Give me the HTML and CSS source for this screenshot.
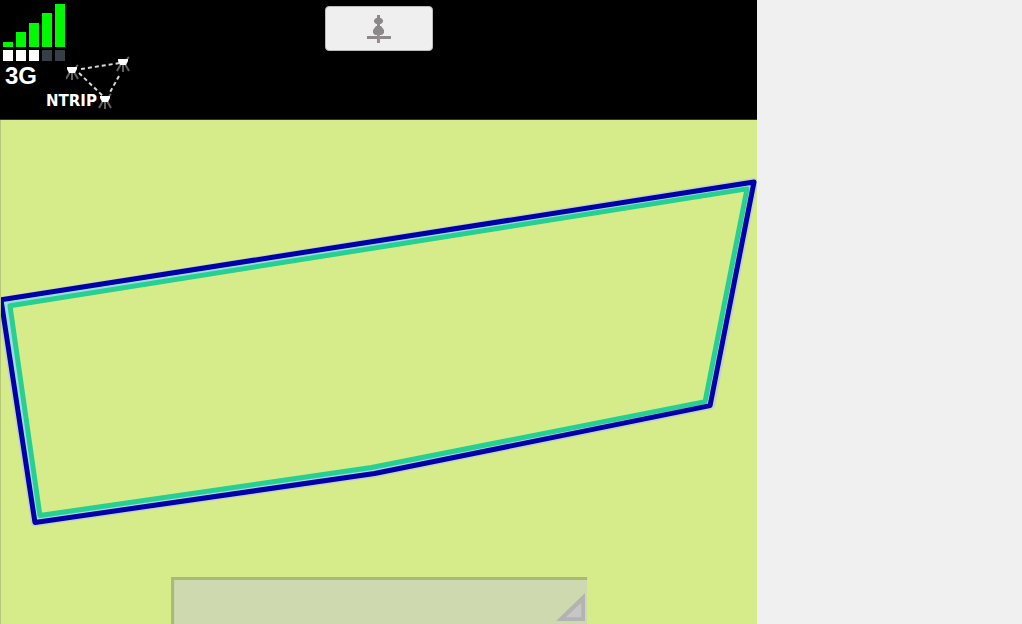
FILE: index.html
```html
<!DOCTYPE html>
<html lang="en">
<head>
<meta charset="utf-8">
<meta name="viewport" content="width=device-width, initial-scale=1">
<title>Field map</title>
<link rel="stylesheet" href="styles.css">
</head>
<body>
<div class="app">
  <main class="device">
    <header class="status-bar">
      <div class="status">
        <div class="network">
          <svg class="signal" viewBox="0 0 66 58" aria-hidden="true">
            <g fill="#00f800">
              <rect x="3" y="38" width="10" height="5"/>
              <rect x="16" y="28" width="10" height="15"/>
              <rect x="29" y="19" width="10" height="24"/>
              <rect x="42" y="9" width="10" height="34"/>
              <rect x="55" y="0" width="10" height="43"/>
            </g>
            <g fill="#fff">
              <rect x="3" y="46" width="10" height="11"/>
              <rect x="16" y="46" width="10" height="11"/>
              <rect x="29" y="46" width="10" height="11"/>
            </g>
            <g fill="#383e46">
              <rect x="42" y="46" width="10" height="11"/>
              <rect x="55" y="46" width="10" height="11"/>
            </g>
          </svg>
          <span class="network-type">3G</span>
        </div>
        <div class="ntrip">
          <svg class="stations" viewBox="0 0 66 54" aria-hidden="true">
            <defs>
              <g id="station">
                <path d="M0 1V10M-2 2L-6 9M2 2L6 9M4 -3L6 -5" stroke="#626262" stroke-width="2" fill="none"/>
                <path d="M-5 -3H5V-1L3 3H-3L-5 -1Z" fill="#fff"/>
              </g>
            </defs>
            <path d="M15 13L54 7M13 17L38 41M53 20L43 38" fill="none" stroke="#d8d8d8" stroke-width="2" stroke-dasharray="4 3"/>
            <use href="#station" x="6" y="14"/>
            <use href="#station" x="57" y="6"/>
            <use href="#station" x="39" y="43"/>
          </svg>
          <span class="ntrip-label">NTRIP</span>
        </div>
      </div>
      <button class="position-button" type="button" aria-label="Centre on position">
        <svg class="position-icon" viewBox="0 0 24 30" aria-hidden="true">
          <g fill="#8b8989">
            <rect x="10" y="1" width="3" height="28"/>
            <path d="M7 6L9 4H14L16 6V8L14 10H9L7 8Z"/>
            <path d="M6 16L9 12H14L17 16V19L15 21H8L6 19Z"/>
            <rect x="0" y="22" width="24" height="3"/>
          </g>
          <path d="M12 20V29" stroke="#b09090" stroke-width="1"/>
        </svg>
      </button>
    </header>
    <section class="map">
      <svg class="field" viewBox="0 0 757 504" role="img" aria-label="Field boundary">
        <g fill="none" stroke-linejoin="round">
          <path class="glow" d="M0 181L754 62L711 286L374 354L34 403Z"/>
          <path class="gap" d="M5 184L750 66L708 283L373 351L37 400Z"/>
          <path class="inner" d="M9 186L747 69L705 282L371 348L39 396Z"/>
          <path class="outer" d="M0 180L754 62L710 286L374 354L34 403Z"/>
        </g>
      </svg>
      <div class="selector">
        <select class="layer-select" aria-label="Layer"><option value=""></option></select>
        <svg class="select-corner" viewBox="0 0 30 29" aria-hidden="true">
          <path d="M0 29L30 0V29Z" fill="#b3b3b1"/>
          <path d="M10 25L26 10V25Z" fill="#c6c7c5"/>
        </svg>
      </div>
    </section>
  </main>
  <aside class="side"></aside>
</div>
</body>
</html>
```
FILE: styles.css
```css
* {
  box-sizing: border-box;
}

body {
  margin: 0;
  font-family: "Liberation Sans", Arial, sans-serif;
  background: #f0f0f0;
}

.app {
  display: grid;
  grid-template-columns: 757fr 265fr;
  min-height: 100vh;
}

.device {
  display: flex;
  flex-direction: column;
  min-width: 0;
}

.status-bar {
  display: grid;
  grid-template-columns: 1fr 108px 1fr;
  align-items: start;
  height: 120px;
  padding-top: 4px;
  background: #000;
  border-bottom: 1px solid #33371f;
  color: #fff;
}

.status {
  display: flex;
}

.network {
  display: flex;
  flex-direction: column;
  width: 66px;
}

.signal {
  display: block;
  width: 66px;
  height: 58px;
}

.network-type {
  padding-left: 5px;
  font-size: 24px;
  line-height: 28px;
  font-weight: bold;
}

.ntrip {
  display: grid;
  margin-top: 52px;
}

.ntrip > * {
  grid-area: 1 / 1;
}

.stations {
  width: 66px;
  height: 54px;
}

.ntrip-label {
  align-self: end;
  margin-left: -20px;
  font-family: "DejaVu Sans", sans-serif;
  font-size: 15px;
  line-height: 18px;
  font-weight: bold;
}

.position-button {
  display: flex;
  align-items: center;
  justify-content: center;
  height: 45px;
  margin-top: 2px;
  padding: 0;
  border: 1px solid #bbb;
  border-radius: 4px;
  background: #efefef;
}

.position-icon {
  width: 24px;
  height: 30px;
}

.map {
  position: relative;
  display: flex;
  flex: 1;
  overflow: hidden;
  background: #d6ec8b;
  border-left: 1px solid #b5c87a;
}

.field {
  display: block;
  width: 100%;
  height: auto;
  align-self: flex-start;
}

.glow {
  stroke: #c4d2c0;
  stroke-width: 8px;
}

.gap {
  stroke: #9cdfe0;
  stroke-width: 5px;
}

.inner {
  stroke: #27cf91;
  stroke-width: 5px;
}

.outer {
  stroke: #0000a8;
  stroke-width: 5px;
}

.selector {
  position: absolute;
  left: 50%;
  bottom: 0;
  display: flex;
  width: 55%;
  height: 47px;
  transform: translateX(-50%);
}

.layer-select {
  width: 100%;
  appearance: none;
  border: 0 solid #a9b976;
  border-width: 3px 0 0 3px;
  border-radius: 0;
  background: #ced9af;
}

.select-corner {
  position: absolute;
  right: 2px;
  bottom: 3px;
  width: 29px;
  height: 28px;
  pointer-events: none;
}

.side {
  background: #f0f0f0;
}
```
